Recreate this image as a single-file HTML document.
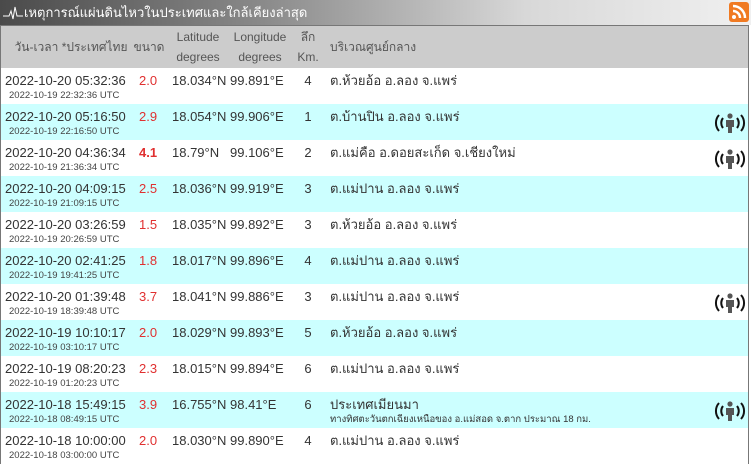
<!DOCTYPE html>
<html><head><meta charset="utf-8"><style>
*{margin:0;padding:0;box-sizing:border-box}
html,body{width:751px;height:435px;overflow:hidden}
body{background:#fff;font-family:"Liberation Sans","DejaVu Sans",sans-serif;color:#333}
.top{position:absolute;left:0;top:0;width:751px;height:25px;background:linear-gradient(90deg,#4a4a4a 0%,#8a8a8a 35%,#d8d8d8 70%,#f0f0f0 100%);color:#fff;font-size:13px;line-height:25px;padding-left:24px}
.rss{position:absolute;right:2px;top:2px;width:20px;height:20px;background:#f07a22;border-radius:3px}
.tbl{position:absolute;left:0;top:25px;width:749px;border-left:1px solid #777;border-right:1px solid #777;border-top:1px solid #777}
.hd{height:42px;background:#cccccc;position:relative;font-size:12px;color:#555}
.hd div{position:absolute;text-align:center;line-height:20px}
.row{height:36px;position:relative;font-size:13px}
.row.c{background:#ccffff}
.row div{position:absolute;top:4px;line-height:18px}
.d{left:4px;color:#333}
.u{position:absolute;left:8px!important;top:22px!important;font-size:9.5px;line-height:11px!important;color:#444}
.m{left:138px;color:#e03030}
.la{left:171px}.lo{left:229px}
.dp{left:296px;width:22px;text-align:center}
.rg{left:329px}
.ic{left:712px;top:8px!important}
</style></head><body>
<div class="top">เหตุการณ์แผ่นดินไหวในประเทศและใกล้เคียงล่าสุด
<svg style="position:absolute;left:3px;top:5px" width="20" height="15"><polyline points="0,11 6,11 8,6 10,14 12,2 14,11 20,11" fill="none" stroke="#fff" stroke-width="1"/></svg></div>
<div class="rss"><svg width="20" height="20"><circle cx="5" cy="15" r="2" fill="#fff"/><path d="M4 9a7 7 0 0 1 7 7M4 4a12 12 0 0 1 12 12" fill="none" stroke="#fff" stroke-width="2.5"/></svg></div>
<div class="tbl">
<div class="hd">
<div style="left:10px;width:120px;top:11px">วัน-เวลา *ประเทศไทย</div>
<div style="left:128px;width:40px;top:11px">ขนาด</div>
<div style="left:168px;width:58px;top:1px">Latitude<br>degrees</div>
<div style="left:228px;width:62px;top:1px">Longitude<br>degrees</div>
<div style="left:296px;width:22px;top:1px">ลึก<br>Km.</div>
<div style="left:329px;top:11px">บริเวณศูนย์กลาง</div>
</div>
<div id="rows"></div>
</div>
<script>
var R=[["2022-10-20 05:32:36","2022-10-19 22:32:36","2.0","18.034°N","99.891°E","4","ต.ห้วยอ้อ อ.ลอง จ.แพร่",0],
["2022-10-20 05:16:50","2022-10-19 22:16:50","2.9","18.054°N","99.906°E","1","ต.บ้านปิน อ.ลอง จ.แพร่",1],
["2022-10-20 04:36:34","2022-10-19 21:36:34","4.1","18.79°N","99.106°E","2","ต.แม่คือ อ.ดอยสะเก็ด จ.เชียงใหม่",1],
["2022-10-20 04:09:15","2022-10-19 21:09:15","2.5","18.036°N","99.919°E","3","ต.แม่ปาน อ.ลอง จ.แพร่",0],
["2022-10-20 03:26:59","2022-10-19 20:26:59","1.5","18.035°N","99.892°E","3","ต.ห้วยอ้อ อ.ลอง จ.แพร่",0],
["2022-10-20 02:41:25","2022-10-19 19:41:25","1.8","18.017°N","99.896°E","4","ต.แม่ปาน อ.ลอง จ.แพร่",0],
["2022-10-20 01:39:48","2022-10-19 18:39:48","3.7","18.041°N","99.886°E","3","ต.แม่ปาน อ.ลอง จ.แพร่",1],
["2022-10-19 10:10:17","2022-10-19 03:10:17","2.0","18.029°N","99.893°E","5","ต.ห้วยอ้อ อ.ลอง จ.แพร่",0],
["2022-10-19 08:20:23","2022-10-19 01:20:23","2.3","18.015°N","99.894°E","6","ต.แม่ปาน อ.ลอง จ.แพร่",0],
["2022-10-18 15:49:15","2022-10-18 08:49:15","3.9","16.755°N","98.41°E","6","ประเทศเมียนมา",1],
["2022-10-18 10:00:00","2022-10-18 03:00:00","2.0","18.030°N","99.890°E","4","ต.แม่ปาน อ.ลอง จ.แพร่",0]];
var ic='<svg width="34" height="22" viewBox="0 0 34 22"><path d="M6 3a12 12 0 0 0 0 16M28 3a12 12 0 0 1 0 16M10 6a8 8 0 0 0 0 10M24 6a8 8 0 0 1 0 10" fill="none" stroke="#111" stroke-width="2"/><circle cx="17" cy="4" r="2.6" fill="#555"/><path d="M13 8h8v7h-2v6h-4v-6h-2z" fill="#555"/></svg>';
var h='';R.forEach(function(r,i){h+='<div class="row'+(i%2?' c':'')+'"><div class="d">'+r[0]+'</div><div class="u">'+r[1]+' UTC</div><div class="m"'+(r[2]=="4.1"?' style="font-weight:bold"':'')+'>'+r[2]+'</div><div class="la">'+r[3]+'</div><div class="lo">'+r[4]+'</div><div class="dp">'+r[5]+'</div><div class="rg">'+r[6]+'</div>'+(i==9?'<div style="left:329px;top:22px;font-size:9.5px;line-height:11px">ทางทิศตะวันตกเฉียงเหนือของ อ.แม่สอด จ.ตาก ประมาณ 18 กม.</div>':'')+(r[7]?'<div class="ic">'+ic+'</div>':'')+'</div>'});
document.getElementById('rows').innerHTML=h;
</script>
</body></html>
